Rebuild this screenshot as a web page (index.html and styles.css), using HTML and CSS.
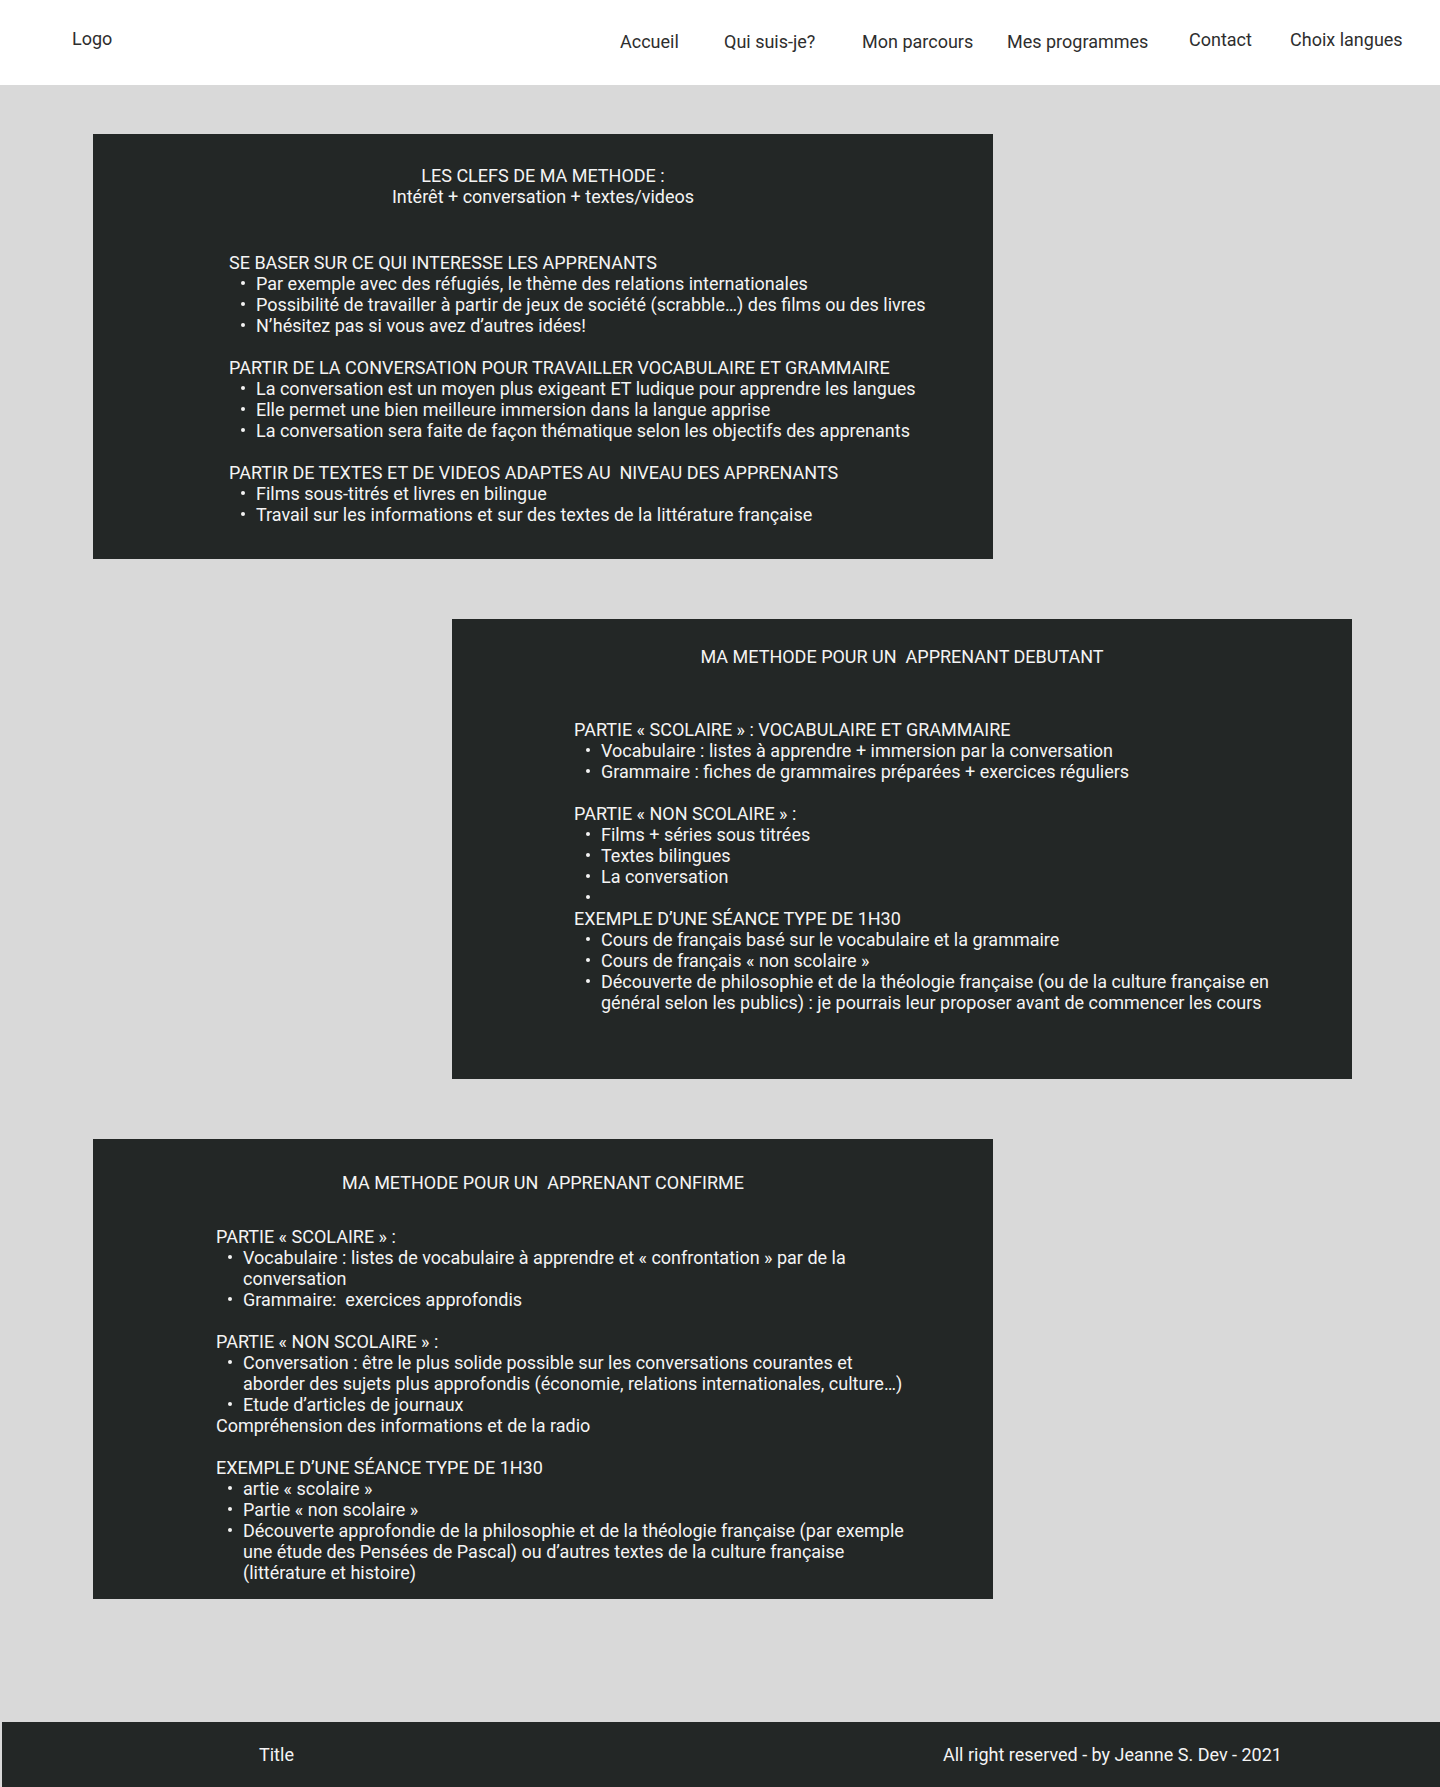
FILE: index.html
```html
<!DOCTYPE html>
<html lang="fr">
<head>
<meta charset="utf-8">
<title>Ma méthode</title>
<link rel="stylesheet" href="styles.css">
</head>
<body>
<header class="site-header">
  <div class="logo">Logo</div>
  <nav class="nav">
    <a class="nav-link">Accueil</a>
    <a class="nav-link">Qui suis-je?</a>
    <a class="nav-link">Mon parcours</a>
    <a class="nav-link">Mes programmes</a>
    <a class="nav-link nav-link--up">Contact</a>
    <a class="nav-link nav-link--up">Choix langues</a>
  </nav>
</header>

<main class="main">
  <section class="card card--keys">
    <h2 class="card-title">LES CLEFS DE MA METHODE :<br>Intérêt + conversation + textes/videos</h2>
    <div class="card-body card-body--keys">
      <div class="block">
        <p class="block-head">SE BASER SUR CE QUI INTERESSE LES APPRENANTS</p>
        <ul class="bullets">
          <li>Par exemple avec des réfugiés, le thème des relations internationales</li>
          <li>Possibilité de travailler à partir de jeux de société (scrabble…) des films ou des livres</li>
          <li>N’hésitez pas si vous avez d’autres idées!</li>
        </ul>
      </div>
      <div class="block">
        <p class="block-head">PARTIR DE LA CONVERSATION POUR TRAVAILLER VOCABULAIRE ET GRAMMAIRE</p>
        <ul class="bullets">
          <li>La conversation est un moyen plus exigeant ET ludique pour apprendre les langues</li>
          <li>Elle permet une bien meilleure immersion dans la langue apprise</li>
          <li>La conversation sera faite de façon thématique selon les objectifs des apprenants</li>
        </ul>
      </div>
      <div class="block">
        <p class="block-head">PARTIR DE TEXTES ET DE VIDEOS ADAPTES AU &nbsp;NIVEAU DES APPRENANTS</p>
        <ul class="bullets">
          <li>Films sous-titrés et livres en bilingue</li>
          <li>Travail sur les informations et sur des textes de la littérature française</li>
        </ul>
      </div>
    </div>
  </section>

  <section class="card card--right card--tall card--beginner">
    <h2 class="card-title">MA METHODE POUR UN &nbsp;APPRENANT DEBUTANT</h2>
    <div class="card-body card-body--beginner">
      <div class="block">
        <p class="block-head">PARTIE « SCOLAIRE » : VOCABULAIRE ET GRAMMAIRE</p>
        <ul class="bullets">
          <li>Vocabulaire : listes à apprendre + immersion par la conversation</li>
          <li>Grammaire : fiches de grammaires préparées + exercices réguliers</li>
        </ul>
      </div>
      <div class="block">
        <p class="block-head">PARTIE « NON SCOLAIRE » :</p>
        <ul class="bullets">
          <li>Films + séries sous titrées</li>
          <li>Textes bilingues</li>
          <li>La conversation</li>
          <li></li>
        </ul>
        <p class="block-head">EXEMPLE D’UNE SÉANCE TYPE DE 1H30</p>
        <ul class="bullets">
          <li>Cours de français basé sur le vocabulaire et la grammaire</li>
          <li>Cours de français « non scolaire »</li>
          <li>Découverte de philosophie et de la théologie française (ou de la culture française en général selon les publics) : je pourrais leur proposer avant de commencer les cours</li>
        </ul>
      </div>
    </div>
  </section>

  <section class="card card--tall card--confirmed">
    <h2 class="card-title">MA METHODE POUR UN &nbsp;APPRENANT CONFIRME</h2>
    <div class="card-body card-body--confirmed">
      <div class="block">
        <p class="block-head">PARTIE « SCOLAIRE » :</p>
        <ul class="bullets">
          <li>Vocabulaire : listes de vocabulaire à apprendre et « confrontation » par de la conversation</li>
          <li>Grammaire: &nbsp;exercices approfondis</li>
        </ul>
      </div>
      <div class="block">
        <p class="block-head">PARTIE « NON SCOLAIRE » :</p>
        <ul class="bullets">
          <li>Conversation : être le plus solide possible sur les conversations courantes et aborder des sujets plus approfondis (économie, relations internationales, culture…)</li>
          <li>Etude d’articles de journaux</li>
        </ul>
        <p class="block-head">Compréhension des informations et de la radio</p>
      </div>
      <div class="block">
        <p class="block-head">EXEMPLE D’UNE SÉANCE TYPE DE 1H30</p>
        <ul class="bullets">
          <li>artie « scolaire »</li>
          <li>Partie « non scolaire »</li>
          <li>Découverte approfondie de la philosophie et de la théologie française (par exemple une étude des Pensées de Pascal) ou d’autres textes de la culture française (littérature et histoire)</li>
        </ul>
      </div>
    </div>
  </section>
</main>

<footer class="site-footer">
  <div class="footer-title">Title</div>
  <div class="footer-copy">All right reserved - by Jeanne S. Dev - 2021</div>
</footer>
</body>
</html>
```

FILE: styles.css
```css
* { box-sizing: border-box; }

html, body {
  margin: 0;
  padding: 0;
}

body {
  background: #d9d9d9;
  font-family: Roboto, "Liberation Sans", sans-serif;
  color: #333;
}

.site-header {
  height: 85px;
  background: #ffffff;
  display: grid;
  grid-template-columns: 548px auto;
  padding-left: 72px;
  align-items: start;
}

.logo {
  font-size: 18px;
  line-height: 21px;
  padding-top: 28px;
  color: #2e2e2e;
}

.nav {
  display: grid;
  grid-template-columns: 104px 138px 145px 182px 101px auto;
  padding-top: 31px;
}

.nav-link {
  font-size: 18px;
  line-height: 21px;
  color: #2e2e2e;
  text-decoration: none;
  white-space: nowrap;
}

.nav-link--up {
  margin-top: -2px;
}

.main {
  padding-top: 49px;
  padding-bottom: 123px;
  display: flex;
  flex-direction: column;
  gap: 60px;
}

.card {
  width: 900px;
  height: 425px;
  margin-left: 93px;
  background: #232726;
  color: #f4f4f4;
  font-size: 18px;
  line-height: 21px;
}

.card--right {
  margin-left: 452px;
}

.card--tall {
  height: 460px;
}

.card-title {
  margin: 0;
  font-weight: 400;
  font-size: 18px;
  line-height: 21px;
  text-align: center;
}

.card--keys .card-title { padding-top: 31px; }
.card--beginner .card-title { padding-top: 27px; }
.card--confirmed .card-title { padding-top: 33px; }

.card-body {
  display: flex;
  flex-direction: column;
  gap: 21px;
}

.card-body--keys {
  padding-left: 136px;
  padding-top: 45px;
}

.card-body--beginner {
  padding-left: 122px;
  padding-top: 52px;
  padding-right: 62px;
}

.card-body--confirmed {
  padding-left: 123px;
  padding-top: 33px;
  padding-right: 75px;
}

.block-head {
  margin: 0;
}

.bullets {
  list-style: none;
  margin: 0;
  padding: 0;
}

.bullets li {
  display: flex;
  align-items: flex-start;
  min-height: 21px;
}

.bullets li::before {
  content: "";
  flex: 0 0 4px;
  height: 4px;
  margin: 8px 11px 0 12px;
  border-radius: 50%;
  background: #f4f4f4;
}

.site-footer {
  height: 65px;
  margin-left: 2px;
  background: #232726;
  color: #f4f4f4;
  font-size: 18px;
  line-height: 21px;
  display: grid;
  grid-template-columns: 684px auto;
  align-items: center;
  padding-left: 257px;
}
```
